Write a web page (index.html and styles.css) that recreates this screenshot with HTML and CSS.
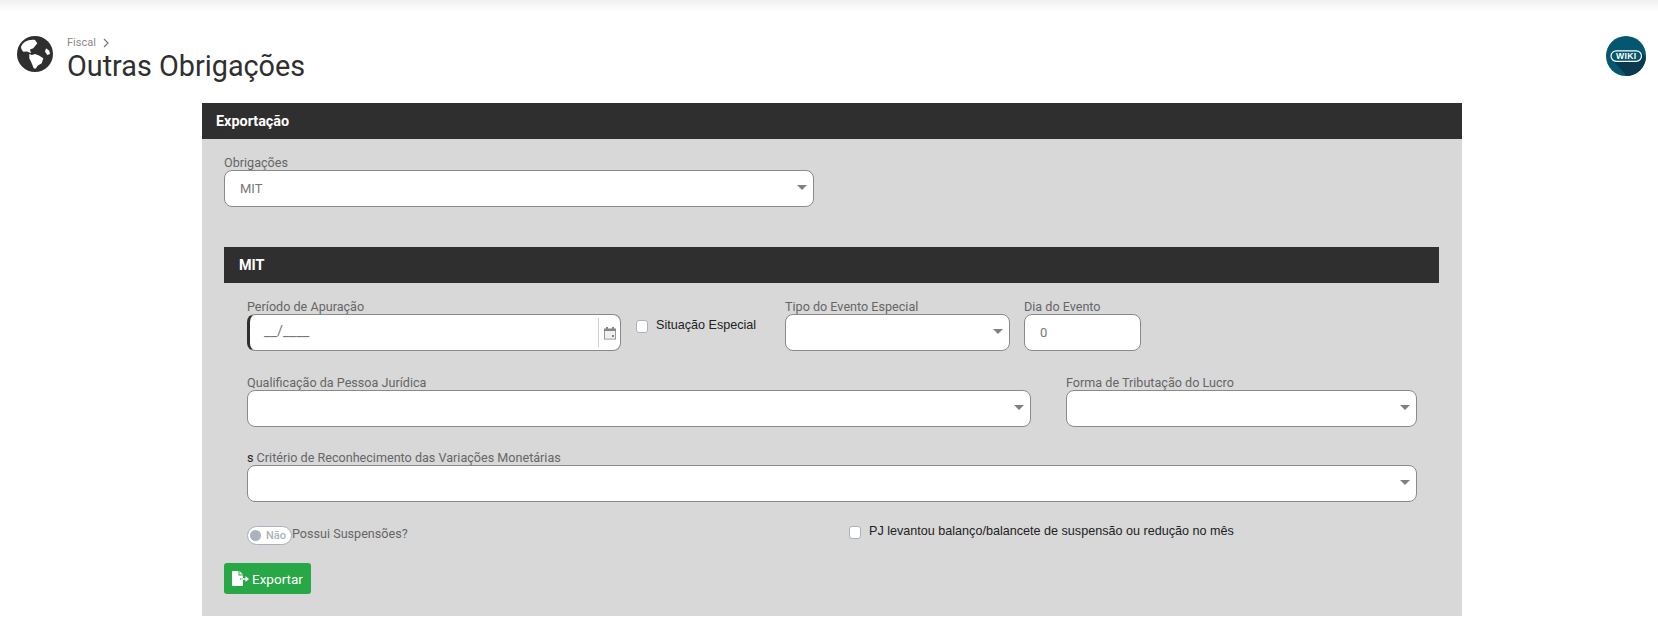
FILE: index.html
```html
<!DOCTYPE html>
<html lang="pt-BR">
<head>
<meta charset="utf-8">
<title>Outras Obrigações</title>
<link rel="stylesheet" href="styles.css">
</head>
<body>
<div class="topbar"></div>
<header class="page-head">
  <svg class="globe" viewBox="0 0 36 36" aria-hidden="true">
    <circle cx="18" cy="18" r="18" fill="#2f2f2f"/>
    <path fill="#fff" d="M4 10.700 C5 8.500 6.500 6.800 8 5.700 C11 4 15 3.300 18 4 L20.300 7.300 L16.300 12.300 L13 13.500 L13.500 15.500 L14 17.300 L10 15.500 L6.300 15.700 C5 14.500 4 12.500 4 10.700 Z"/>
    <path fill="#fff" d="M12.300 18 L15 19 L18 18 L22 19.500 L26.300 22.300 L24.700 27.300 L20.300 30 L19 32.500 L16.800 32.500 L14.700 27.300 L12.300 22.300 Z"/>
    <path fill="#fff" d="M29 12.300 L32.300 14.700 L33 18 L30.300 19 L28 15.700 Z"/>
  </svg>
  <div class="titles">
    <div class="crumb"><span>Fiscal</span><svg class="chev" viewBox="0 0 8 10"><path d="M2 1 L6 5 L2 9" fill="none" stroke="#777" stroke-width="1.200"/></svg></div>
    <h1>Outras Obrigações</h1>
  </div>
  <svg class="wiki" viewBox="0 0 40 40" aria-hidden="true">
    <defs><clipPath id="wc"><circle cx="20" cy="20" r="20"/></clipPath></defs>
    <circle cx="20" cy="20" r="20" fill="#05566f"/>
    <path clip-path="url(#wc)" d="M7 24 L34 24 L36 17 L44 26 L44 44 L24 44 Z" fill="#0b3a50"/>
    <rect x="5" y="14.800" width="30.500" height="10.500" rx="5.200" fill="#05566f" stroke="#fff" stroke-width="1.200"/>
    <text x="20.200" y="23.300" text-anchor="middle" class="wiki-text">WIKI</text>
  </svg>
</header>

<main class="panel">
  <div class="bar">Exportação</div>
  <div class="panel-body">
    <div class="field obrig">
      <label>Obrigações</label>
      <div class="ctl select"><span class="val">MIT</span><i class="caret"></i></div>
    </div>
    <div class="bar sub">MIT</div>
    <div class="sub-body">
      <div class="row r1">
        <div class="field date">
          <label>Período de Apuração</label>
          <div class="ctl focus"><span class="mask">__/____</span><span class="cal">
            <svg viewBox="0 0 14 14" width="14" height="14"><path fill="#858585" d="M1 2.500 H3 V1 H5 V2.500 H9 V1 H11 V2.500 H13 V13.500 H1 Z"/><rect x="1.800" y="5" width="10.400" height="7.700" fill="#f0f0f0"/><rect x="9" y="9" width="2" height="2" fill="#858585"/></svg>
          </span></div>
        </div>
        <label class="check special"><i class="box"></i><span>Situação Especial</span></label>
        <div class="field tipo">
          <label>Tipo do Evento Especial</label>
          <div class="ctl select"><i class="caret"></i></div>
        </div>
        <div class="field dia">
          <label>Dia do Evento</label>
          <div class="ctl"><span class="val">0</span></div>
        </div>
      </div>
      <div class="row r2">
        <div class="field qual">
          <label>Qualificação da Pessoa Jurídica</label>
          <div class="ctl select"><i class="caret"></i></div>
        </div>
        <div class="field forma">
          <label>Forma de Tributação do Lucro</label>
          <div class="ctl select"><i class="caret"></i></div>
        </div>
      </div>
      <div class="field crit">
        <label><b class="stray">s</b> Critério de Reconhecimento das Variações Monetárias</label>
        <div class="ctl select"><i class="caret"></i></div>
      </div>
      <div class="row r4">
        <div class="susp">
          <span class="toggle"><i class="knob"></i><span>Não</span></span>
          <span class="susp-text">Possui Suspensões?</span>
        </div>
        <label class="check pj"><i class="box"></i><span>PJ levantou balanço/balancete de suspensão ou redução no mês</span></label>
      </div>
    </div>
    <button class="export" type="button">
      <svg viewBox="0 0 17 15" width="17" height="15"><path fill="#fff" d="M0 1 Q0 0 1 0 H6.500 V4.500 H11 V7 H8 V9 H11 V14 Q11 15 10 15 H1 Q0 15 0 14 Z"/><path fill="#fff" d="M7.500 0 L11 3.500 H7.500 Z"/><path fill="#fff" d="M8.500 7.200 H13.500 V5 L17 8 L13.500 11 V8.800 H8.500 Z"/></svg>
      <span>Exportar</span>
    </button>
  </div>
</main>
</body>
</html>
```
FILE: styles.css
```css
* { box-sizing: border-box; }
html, body { margin: 0; padding: 0; }
body {
  background: #fff;
  font-family: Roboto, "Liberation Sans", sans-serif;
  color: #2f2f2f;
  height: 639px;
  overflow: hidden;
}
.topbar {
  height: 12px;
  background: linear-gradient(#f0f0f0, #fff);
}
.page-head {
  display: flex;
  align-items: flex-start;
  height: 91px;
  padding: 24px 12px 0 17px;
}
.globe { width: 36px; height: 36px; flex: none; }
.titles { margin-left: 14px; flex: 1; }
.crumb {
  display: flex;
  align-items: center;
  gap: 6px;
  font-size: 11px;
  line-height: 12px;
  color: #8a8a8a;
  margin-top: 1px;
}
.chev { width: 8px; height: 10px; }
h1 {
  margin: 1px 0 0;
  font-size: 28.8px;
  line-height: 33px;
  font-weight: 400;
  color: #2f2f2f;
}
.wiki { width: 40px; height: 40px; flex: none; }
.wiki-text { font: 700 8.6px "Liberation Sans", sans-serif; fill: #fff; letter-spacing: 0.3px; }

.panel {
  width: 1260px;
  height: 513px;
  margin-left: 202px;
  background: #d8d8d8;
}
.bar {
  height: 36px;
  background: #2f2f2f;
  color: #fff;
  font-weight: 700;
  font-size: 14.4px;
  line-height: 37px;
  padding-left: 14px;
}
.panel-body { padding: 16px 23px 0 22px; }
.field label {
  display: block;
  font-size: 12.6px;
  line-height: 15px;
  color: #666;
  height: 15px;
}
.ctl {
  position: relative;
  height: 37px;
  background: #fff;
  border: 1px solid #8a8a8a;
  border-radius: 8px;
  display: flex;
  align-items: center;
  font-size: 13px;
  color: #777;
}
.val { padding-left: 15px; }
.caret {
  position: absolute;
  right: 6px;
  top: 14px;
  width: 0;
  height: 0;
  border-left: 5px solid transparent;
  border-right: 5px solid transparent;
  border-top: 5px solid #808080;
}
.obrig { width: 590px; }
.sub { margin-top: 40px; padding-left: 15px; }
.sub-body { padding: 16px 22px 0 23px; }
.row { display: flex; align-items: flex-start; }
.date { width: 374px; }
.focus { border-left: 3px solid #2f2f2f; }
.mask { padding-left: 14px; font-size: 14.5px; color: #777; margin-top: -3px; }
.cal {
  position: absolute;
  right: 0;
  top: 3px;
  bottom: 3px;
  width: 22px;
  border-left: 1px solid #d0d0d0;
  display: flex;
  align-items: center;
  justify-content: center;
}
.check {
  display: flex;
  align-items: flex-start;
  gap: 8px;
  font-family: "Liberation Sans", sans-serif;
  font-size: 12.6px;
  line-height: 15px;
  color: #222;
}
.check span { margin-top: -1px; }
.box {
  width: 12px;
  height: 13px;
  flex: none;
  background: #fff;
  border: 1px solid #aab2bd;
  border-radius: 3px;
  margin-top: 1px;
}
.special { margin: 20px 0 0 15px; width: 149px; }
.tipo { width: 225px; }
.dia { width: 117px; margin-left: 14px; }
.r2 { margin-top: 24px; }
.qual { width: 784px; }
.forma { width: 351px; margin-left: 35px; }
.crit { margin-top: 23px; }
.stray { font-weight: 400; color: #222; }
.r4 { margin-top: 24px; }
.susp {
  display: flex;
  align-items: flex-start;
  width: 602px;
  font-size: 12.6px;
  line-height: 15px;
  color: #666;
}
.toggle {
  display: flex;
  align-items: center;
  width: 45px;
  height: 19px;
  background: #fff;
  border: 1px solid #aab2bd;
  border-radius: 10px;
  padding-left: 2px;
  gap: 5px;
  font-size: 11px;
  font-weight: 500;
  color: #aab2bd;
}
.knob { width: 11px; height: 11px; border-radius: 50%; background: #aab2bd; }
.pj { margin-top: -1px; }
.export {
  display: flex;
  align-items: center;
  gap: 3px;
  margin-top: 18px;
  width: 87px;
  height: 31px;
  padding: 0 8px;
  background: #27a745;
  border: 0;
  border-radius: 3px;
  color: #fff;
  font-family: Roboto, sans-serif;
  font-size: 13.5px;
}
```
